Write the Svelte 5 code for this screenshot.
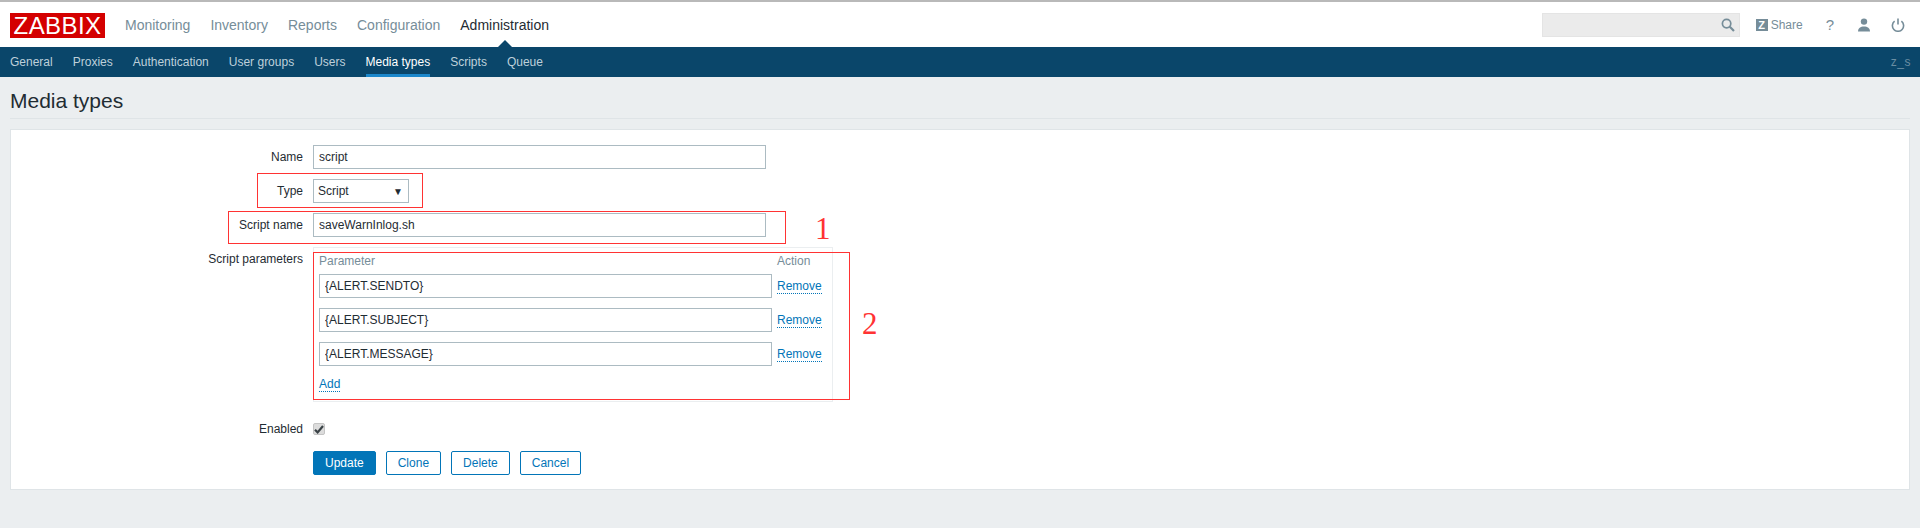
<script lang="ts">
  const mainNav = ["Monitoring", "Inventory", "Reports", "Configuration", "Administration"];
  const subNav = ["General", "Proxies", "Authentication", "User groups", "Users", "Media types", "Scripts", "Queue"];
  const params = ["{ALERT.SENDTO}", "{ALERT.SUBJECT}", "{ALERT.MESSAGE}"];
</script>

<div class="page">
  <header class="top">
    <div class="logo">ZABBIX</div>
    <nav class="main-nav">
      {#each mainNav as item}
        <a href="#top" class:active={item === "Administration"}>{item}</a>
      {/each}
    </nav>
    <div class="tools">
      <div class="search">
        <svg width="14" height="14" viewBox="0 0 14 14" fill="none" stroke="#768d99" stroke-width="1.7">
          <circle cx="5.6" cy="5.6" r="4.2" />
          <path d="M8.8 8.8 13 13" stroke-width="2.2" />
        </svg>
      </div>
      <span class="share">
        <span class="share-z">Z</span>
        Share
      </span>
      <span class="help">?</span>
      <svg class="user" width="14" height="14" viewBox="0 0 14 14" fill="#768d99">
        <circle cx="7" cy="3.6" r="3.2" />
        <path d="M1 13.5C1 10 3.5 8.4 7 8.4s6 1.6 6 5.1z" />
      </svg>
      <svg class="power" width="14" height="14" viewBox="0 0 14 14" fill="none" stroke="#768d99" stroke-width="1.6">
        <path d="M3.6 3.2a5.6 5.6 0 1 0 6.8 0" />
        <path d="M7 0.5v6" />
      </svg>
    </div>
  </header>

  <nav class="sub-nav">
    {#each subNav as item}
      <a href="#top" class:active={item === "Media types"}>{item}</a>
    {/each}
    <span class="server">z_s</span>
  </nav>

  <main class="content">
    <h1>Media types</h1>

    <form class="card">
      <div class="row">
        <label for="name">Name</label>
        <input id="name" class="wide" value="script" readonly />
      </div>
      <div class="row">
        <span class="label">Type</span>
        <div class="select">Script<span class="arrow">▼</span></div>
      </div>
      <div class="row">
        <label for="script-name">Script name</label>
        <input id="script-name" class="wide" value="saveWarnInlog.sh" readonly />
      </div>
      <div class="row">
        <span class="label params-label">Script parameters</span>
        <div class="params">
          <div class="param-head"><span>Parameter</span><span>Action</span></div>
          {#each params as param}
            <div class="param-row">
              <input value={param} readonly />
              <a href="#top" class="link">Remove</a>
            </div>
          {/each}
          <a href="#top" class="link add">Add</a>
        </div>
      </div>
      <div class="row enabled">
        <span class="label">Enabled</span>
        <span class="check">
          <svg width="10" height="9" viewBox="0 0 10 9" fill="none" stroke="#3a4246" stroke-width="2.2">
            <path d="M1 4.8 3.6 7.4 9 1" />
          </svg>
        </span>
      </div>
      <div class="buttons">
        <button type="button" class="primary">Update</button>
        <button type="button">Clone</button>
        <button type="button">Delete</button>
        <button type="button">Cancel</button>
      </div>
    </form>
  </main>

  <!-- red annotations drawn on top of the screenshot -->
  <div class="mark mark-type"></div>
  <div class="mark mark-name"></div>
  <div class="mark mark-params"></div>
  <span class="num num-1">1</span>
  <span class="num num-2">2</span>
</div>

<style>
  :global(body) {
    margin: 0;
    background: #ebeef0;
  }

  .page {
    position: relative;
    height: 528px;
    overflow: hidden;
    background: #ebeef0;
    color: #1f2c33;
    font-family: "Liberation Sans", Arial, sans-serif;
    font-size: 12px;
  }

  a {
    text-decoration: none;
  }

  .top {
    display: flex;
    align-items: center;
    box-sizing: border-box;
    border-top: 2px solid #b9b9b9;
    background: #fff;
    height: 47px;
    padding: 0 15px 0 10px;
  }

  .logo {
    box-sizing: border-box;
    margin-top: 1px;
    background: #d40000;
    width: 95px;
    height: 25px;
    color: #fff;
    font-size: 24px;
    line-height: 25px;
    letter-spacing: 0.4px;
    text-align: center;
  }

  .main-nav {
    display: flex;
    gap: 20px;
    margin-left: 20px;
    font-size: 14px;
  }

  .main-nav a {
    position: relative;
    color: #768d99;
  }

  .main-nav a.active {
    color: #1f2c33;
  }

  .main-nav a.active::after {
    position: absolute;
    top: 23px;
    left: 50%;
    margin-left: -7px;
    border-right: 7px solid transparent;
    border-bottom: 7px solid #0a466a;
    border-left: 7px solid transparent;
    content: "";
  }

  .tools {
    display: flex;
    align-items: center;
    margin-left: auto;
  }

  .search {
    display: flex;
    justify-content: flex-end;
    align-items: center;
    box-sizing: border-box;
    border: 1px solid #e4e4e4;
    background: #ebebeb;
    padding-right: 4px;
    width: 198px;
    height: 24px;
  }

  .share {
    display: flex;
    align-items: center;
    gap: 3px;
    margin-left: 16px;
    color: #768d99;
  }

  .share-z {
    display: inline-block;
    background: #768d99;
    width: 12px;
    height: 12px;
    color: #fff;
    font-weight: 700;
    font-size: 11px;
    line-height: 12px;
    text-align: center;
  }

  .help {
    margin-left: 23px;
    color: #768d99;
    font-size: 15px;
  }

  .user {
    margin-left: 23px;
  }

  .power {
    margin-left: 20px;
  }

  .sub-nav {
    display: flex;
    align-items: stretch;
    gap: 20px;
    background: #0a466a;
    height: 30px;
    padding: 0 10px;
    line-height: 30px;
  }

  .sub-nav a {
    box-sizing: border-box;
    color: #bed0da;
  }

  .sub-nav a.active {
    border-bottom: 3px solid #1b87cb;
    color: #fff;
  }

  .server {
    margin-right: -1px;
    margin-left: auto;
    color: #6a8ea3;
    font-size: 12px;
    letter-spacing: 0.5px;
  }

  .content {
    padding: 0 10px;
  }

  h1 {
    margin: 0 0 10px;
    border-bottom: 1px solid #dfe4e7;
    height: 41px;
    color: #1f2c33;
    font-weight: 400;
    font-size: 21px;
    line-height: 47px;
  }

  .card {
    display: flex;
    flex-direction: column;
    gap: 10px;
    box-sizing: border-box;
    border: 1px solid #dfe4e7;
    background: #fff;
    height: 361px;
    padding: 15px 0 0;
  }

  .row {
    display: flex;
    align-items: center;
    gap: 10px;
  }

  .row:has(.params) {
    align-items: flex-start;
  }

  label,
  .label {
    flex: none;
    width: 292px;
    text-align: right;
  }

  .params-label {
    padding-top: 5px;
  }

  input {
    box-sizing: border-box;
    outline: none;
    border: 1px solid #acbbc2;
    background: #fff;
    padding: 0 5px;
    height: 24px;
    color: #1f2c33;
    font-size: 12px;
    font-family: inherit;
  }

  input.wide {
    width: 453px;
  }

  .select {
    display: flex;
    justify-content: space-between;
    align-items: center;
    box-sizing: border-box;
    border: 1px solid #acbbc2;
    padding: 0 5px 0 4px;
    width: 96px;
    height: 24px;
  }

  .arrow {
    font-size: 10px;
  }

  .params {
    display: flex;
    flex-direction: column;
    align-items: flex-start;
    box-sizing: border-box;
    border: 1px solid #ebeef0;
    padding: 0 5px;
    width: 520px;
    height: 155px;
  }

  .param-head {
    display: flex;
    color: #768d99;
    line-height: 26px;
  }

  .param-head span:first-child {
    width: 458px;
  }

  .param-row {
    display: flex;
    align-items: center;
    gap: 5px;
    margin-bottom: 10px;
  }

  .param-row input {
    width: 453px;
  }

  .param-row .link {
    margin-top: 1px;
  }

  .link {
    border-bottom: 1px dotted #0275b8;
    color: #0275b8;
    line-height: 13px;
  }

  .add {
    margin-top: 2px;
  }

  .enabled {
    margin-top: 5px;
    height: 24px;
  }

  .check {
    display: flex;
    justify-content: center;
    align-items: center;
    box-sizing: border-box;
    border: 1px solid #c4c4c4;
    border-radius: 2px;
    background: #dcdcdc;
    width: 12px;
    height: 12px;
  }

  .buttons {
    display: flex;
    gap: 10px;
    margin-left: 302px;
  }

  button {
    box-sizing: border-box;
    border: 1px solid #0275b8;
    border-radius: 2px;
    background: #fff;
    padding: 0 11px;
    height: 24px;
    color: #0275b8;
    font-size: 12px;
    font-family: inherit;
  }

  button.primary {
    background: #0275b8;
    color: #fff;
  }

  .mark {
    position: absolute;
    box-sizing: border-box;
    border: 1px solid #f33;
  }

  .mark-type {
    top: 173px;
    left: 257px;
    width: 166px;
    height: 35px;
  }

  .mark-name {
    top: 211px;
    left: 228px;
    width: 558px;
    height: 33px;
  }

  .mark-params {
    top: 252px;
    left: 313px;
    width: 537px;
    height: 148px;
  }

  .num {
    position: absolute;
    color: #f33;
    font-size: 31px;
    line-height: 30px;
    font-family: "Liberation Serif", serif;
  }

  .num-1 {
    top: 214px;
    left: 815px;
  }

  .num-2 {
    top: 309px;
    left: 862px;
  }
</style>
